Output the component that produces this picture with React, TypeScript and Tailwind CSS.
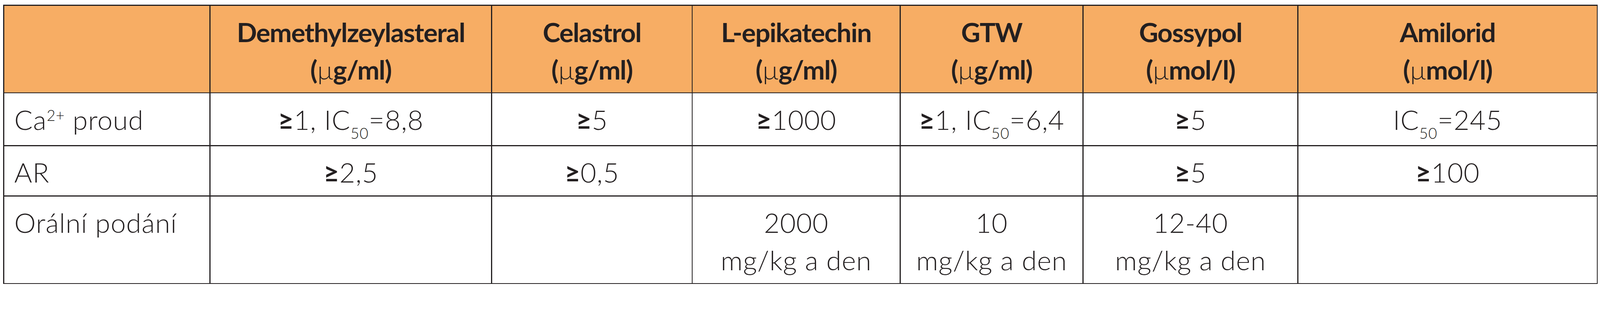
import React from "react";

// The frame is drawn about 1.09x larger into the picture, so horizontal sizes are in vw
// and vertical ones are picture pixels divided by that factor.
const cell = "pt-[19.5px] pb-[11.7px] px-[0.627vw] leading-[95.3px] min-w-0";
const head =
  "bg-[#f7ad64] text-center font-bold text-[67.8px] tracking-[-1.65px]";
const body = "bg-white font-light text-[69.7px] tracking-[1px]";

function Ge() {
  return <span className="font-bold tracking-normal">≥</span>;
}

function Sub({ children }: { children: React.ReactNode }) {
  return (
    <span className="text-[38.5px] leading-none align-[-22.9px]">
      {children}
    </span>
  );
}

function Sup({ children }: { children: React.ReactNode }) {
  return (
    <span className="text-[38.5px] leading-none align-[22.9px]">
      {children}
    </span>
  );
}

function Mu() {
  return <span className="font-light">µ</span>;
}

const headers: { name: string; unit: React.ReactNode }[] = [
  { name: "Demethylzeylasteral", unit: <>(<Mu />g/ml)</> },
  { name: "Celastrol", unit: <>(<Mu />g/ml)</> },
  { name: "L-epikatechin", unit: <>(<Mu />g/ml)</> },
  { name: "GTW", unit: <>(<Mu />g/ml)</> },
  { name: "Gossypol", unit: <>(<Mu />mol/l)</> },
  { name: "Amilorid", unit: <>(<Mu />mol/l)</> },
];

const rows: { label: React.ReactNode; values: React.ReactNode[] }[] = [
  {
    label: (
      <>
        Ca<Sup>2+</Sup> proud
      </>
    ),
    values: [
      <>
        <Ge />1, IC<Sub>50</Sub>=8,8
      </>,
      <>
        <Ge />5
      </>,
      <>
        <Ge />1000
      </>,
      <>
        <Ge />1, IC<Sub>50</Sub>=6,4
      </>,
      <>
        <Ge />5
      </>,
      <>
        IC<Sub>50</Sub>=245
      </>,
    ],
  },
  {
    label: "AR",
    values: [
      <>
        <Ge />2,5
      </>,
      <>
        <Ge />0,5
      </>,
      null,
      null,
      <>
        <Ge />5
      </>,
      <>
        <Ge />100
      </>,
    ],
  },
  {
    label: "Orální podání",
    values: [
      null,
      null,
      <>
        2000
        <br />
        mg/kg a den
      </>,
      <>
        10
        <br />
        mg/kg a den
      </>,
      <>
        12-40
        <br />
        mg/kg a den
      </>,
      null,
    ],
  },
];

export default function App() {
  return (
    <div className="w-screen h-[733px] overflow-hidden bg-white pl-[0.2vw] pt-[12px] font-['Lato',sans-serif] text-[#231f20]">
      <div className="grid w-[99.66vw] grid-cols-[minmax(0,573fr)_minmax(0,784fr)_minmax(0,557fr)_minmax(0,578fr)_minmax(0,508fr)_minmax(0,597fr)_minmax(0,833fr)] gap-x-[0.067vw] gap-y-[2.75px] bg-[#231f20] px-[0.067vw] py-[2.75px]">
        <div className={cell + " " + head}></div>
        {headers.map((h) => (
          <div key={h.name} className={cell + " " + head}>
            {h.name}
            <br />
            {h.unit}
          </div>
        ))}
        {rows.map((r, i) => (
          <React.Fragment key={i}>
            <div className={cell + " " + body + " text-left"}>{r.label}</div>
            {r.values.map((v, j) => (
              <div
                key={j}
                className={cell + " " + body + " text-center whitespace-nowrap"}
              >
                {v}
              </div>
            ))}
          </React.Fragment>
        ))}
      </div>
    </div>
  );
}
